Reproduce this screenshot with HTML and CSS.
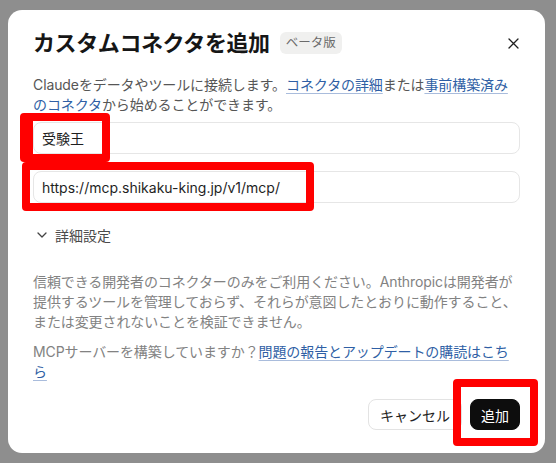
FILE: index.html
```html
<!DOCTYPE html>
<html lang="ja">
<head>
    <meta charset="UTF-8">
    <meta name="viewport" content="width=device-width, initial-scale=1.0">
    <title>カスタムコネクタを追加</title>
    <link rel="stylesheet" href="styles.css">
</head>
<body>

    <div class="overlay">
        <div class="dialog">
            <div class="dialog-head">
                <h1>カスタムコネクタを追加</h1>
                <span class="badge">ベータ版</span>
                <button class="close" aria-label="閉じる">
                    <svg width="11" height="11" viewBox="0 0 11 11"><path d="M1 1L10 10M10 1L1 10" stroke="#1f1f1f" stroke-width="1.3" stroke-linecap="round"/></svg>
                </button>
            </div>

            <p class="desc">Claudeをデータやツールに接続します。<a href="#">コネクタの詳細</a>または<a href="#">事前構築済みのコネクタ</a>から始めることができます。</p>

            <input class="field" type="text" value="受験王">
            <input class="field field-url" type="text" value="https://mcp.shikaku-king.jp/v1/mcp/">

            <button class="advanced">
                <svg width="10" height="6" viewBox="0 0 10 6"><path d="M1 1L5 5L9 1" fill="none" stroke="#444" stroke-width="1.3" stroke-linecap="round" stroke-linejoin="round"/></svg>
                詳細設定
            </button>

            <p class="note">信頼できる開発者のコネクターのみをご利用ください。Anthropicは開発者が提供するツールを管理しておらず、それらが意図したとおりに動作すること、または変更されないことを検証できません。</p>

            <p class="note note-last">MCPサーバーを構築していますか？<a href="#">問題の報告とアップデートの購読はこちら</a></p>

            <div class="actions">
                <button class="btn btn-cancel">キャンセル</button>
                <button class="btn btn-add">追加</button>
            </div>
        </div>
    </div>

    <!-- red annotation frames drawn over the screenshot -->
    <div class="mark mark-name"></div>
    <div class="mark mark-url"></div>
    <div class="mark mark-add"></div>

</body>
</html>
```

FILE: styles.css
```css
body {
    margin: 0;
    background-color: #8e8e8e;
    font-family: Inter, "Noto Sans CJK JP", sans-serif;
    color: #1f1f1f;
}

.overlay {
    padding: 10px 11px 10px 8px;
}

.dialog {
    background-color: #ffffff;
    border-radius: 14px;
    padding: 18px 25px 23px 25px;
}

.dialog-head {
    display: flex;
    align-items: center;
    height: 30px;
}

h1 {
    margin: 0;
    font-size: 22px;
    font-weight: 700;
    letter-spacing: -0.4px;
    color: #161616;
    line-height: 30px;
}

.badge {
    margin-left: 10px;
    padding: 0 6px;
    height: 22px;
    line-height: 22px;
    border-radius: 6px;
    background-color: #f0f0ef;
    color: #6b6b6b;
    font-size: 12.5px;
}

.close {
    margin-left: auto;
    margin-right: -5px;
    width: 24px;
    height: 24px;
    border: none;
    background: none;
    padding: 0;
    display: flex;
    align-items: center;
    justify-content: center;
}

.desc {
    margin: 17px 0 0 0;
    font-size: 14px;
    line-height: 20px;
    letter-spacing: -0.1px;
    color: #565656;
}

a {
    color: #2f5fa5;
    text-decoration: underline;
    text-decoration-color: #a9bcdc;
    text-underline-offset: 3px;
}

.field {
    display: block;
    box-sizing: border-box;
    width: 100%;
    height: 32px;
    margin-top: 7px;
    padding: 0 8px;
    border: 1px solid #e6e6e6;
    border-radius: 8px;
    font-family: Inter, "Noto Sans CJK JP", sans-serif;
    font-size: 14px;
    color: #1f1f1f;
    background-color: #ffffff;
}

.field-url {
    margin-top: 17px;
}

.advanced {
    display: flex;
    align-items: center;
    gap: 8px;
    margin-top: 22px;
    padding: 0 0 0 4px;
    height: 20px;
    border: none;
    background: none;
    font-family: Inter, "Noto Sans CJK JP", sans-serif;
    font-size: 14px;
    color: #4a4a4a;
}

.note {
    margin: 27px 0 0 0;
    font-size: 14px;
    line-height: 20px;
    letter-spacing: -0.1px;
    color: #828282;
}

.note-last {
    margin-top: 10px;
}

.actions {
    display: flex;
    justify-content: flex-end;
    gap: 8px;
    margin-top: 17px;
}

.btn {
    height: 31px;
    padding: 0 11px;
    border-radius: 8px;
    font-family: Inter, "Noto Sans CJK JP", sans-serif;
    font-size: 14px;
}

.btn-cancel {
    background-color: #ffffff;
    border: 1px solid #e3e3e3;
    color: #222222;
}

.btn-add {
    background-color: #0d0d0d;
    border: 1px solid #0d0d0d;
    color: #ffffff;
    padding: 0 10px;
}

.mark {
    position: absolute;
    box-sizing: border-box;
    border: 8px solid #ff0000;
    border-radius: 4px;
}

.mark-name {
    left: 20px;
    top: 113px;
    width: 90px;
    height: 49px;
    border-left-width: 13px;
}

.mark-url {
    left: 22px;
    top: 162px;
    width: 292px;
    height: 49px;
}

.mark-add {
    left: 453px;
    top: 379px;
    width: 85px;
    height: 67px;
}
```
